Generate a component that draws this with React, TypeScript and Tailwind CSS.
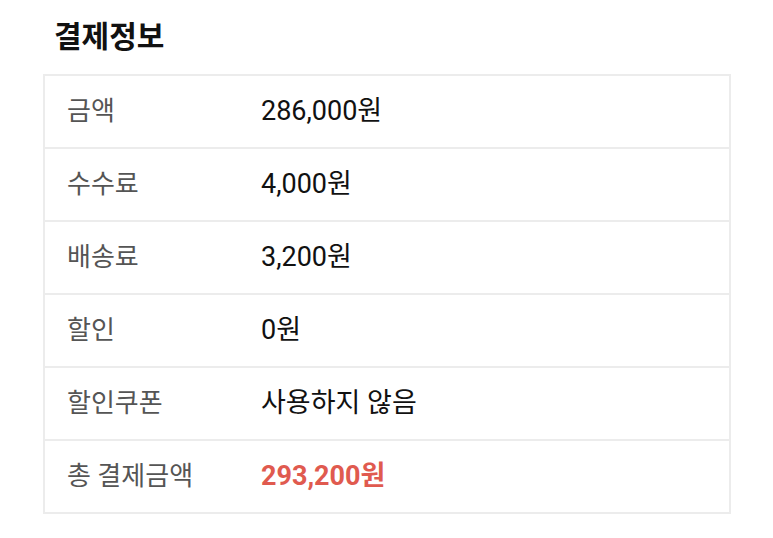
const rows = [
  { label: '금액', value: '286,000원' },
  { label: '수수료', value: '4,000원' },
  { label: '배송료', value: '3,200원' },
  { label: '할인', value: '0원' },
  { label: '할인쿠폰', value: '사용하지 않음' },
];

export default function App() {
  return (
    <main className="min-h-screen bg-white font-['Roboto','Noto_Sans_CJK_KR',sans-serif] px-[43px] pt-[16px]">
      {/* Title */}
      <h2 className="text-[30px] leading-[42px] font-bold text-[#111] pl-[11px] mb-[16px]">결제정보</h2>

      {/* Payment table */}
      <div className="w-[688px] border-2 border-[#ececec]">
        {rows.map(row => (
          <div key={row.label} className="flex items-center h-[73px] border-b-2 border-[#ececec]">
            <span className="w-[216px] pl-[22px] text-[26px] text-[#555]">{row.label}</span>
            <span className="text-[27px] text-[#111]">{row.value}</span>
          </div>
        ))}
        <div className="flex items-center h-[71px]">
          <span className="w-[216px] pl-[22px] text-[26px] text-[#555]">총 결제금액</span>
          <span className="text-[27px] font-bold text-[#e05a4f]">293,200원</span>
        </div>
      </div>
    </main>
  );
}
